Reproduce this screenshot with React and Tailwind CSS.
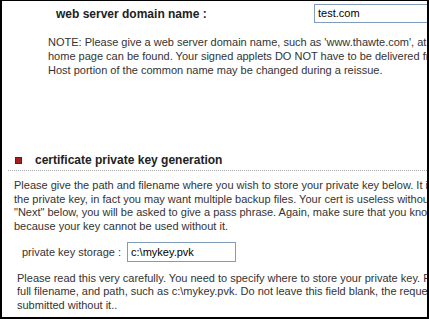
export default function App() {
  return (
    <div className="w-[429px] h-[319px] overflow-hidden bg-white border-t border-l-2 border-r-2 border-b-2 border-black font-['Liberation_Sans',Arial,sans-serif] text-[11px] text-[#333]">
      {/* domain name row */}
      <div className="flex items-start h-[27px] pt-[3px] whitespace-nowrap">
        <div className="w-[260px] shrink-0 pl-[54px] pt-[2px] text-[12px] font-bold text-[#222] leading-[16px]">
          web server domain name :
        </div>
        <div className="ml-[52px] w-[140px] h-[19px] border border-[#7f9db9] pl-[3px] text-[11px] text-black leading-[17px] shrink-0">
          test.com
        </div>
      </div>

      <p className="mt-[7px] pl-[46px] leading-[14px] whitespace-nowrap">
        NOTE: Please give a web server domain name, such as 'www.thawte.com', at which your
        <br />
        home page can be found. Your signed applets DO NOT have to be delivered from this server. The
        <br />
        Host portion of the common name may be changed during a reissue.
      </p>

      {/* section header */}
      <div className="mt-[75px] flex items-center h-[16px] whitespace-nowrap">
        <span className="ml-[13px] w-[7px] h-[7px] bg-[#a51d1d] border border-[#7a1010]" />
        <span className="ml-[13px] text-[12px] font-bold text-[#222] leading-[16px]">
          certificate private key generation
        </span>
      </div>
      <div className="mt-[2px] ml-[6px] border-b border-dotted border-[#aaa]" />

      <p className="mt-[8px] pl-[12px] leading-[13.7px] whitespace-nowrap">
        Please give the path and filename where you wish to store your private key below. It is important to back up
        <br />
        the private key, in fact you may want multiple backup files. Your cert is useless without it. When you press
        <br />
        "Next" below, you will be asked to give a pass phrase. Again, make sure that you know this pass phrase,
        <br />
        because your key cannot be used without it.
      </p>

      <div className="mt-[8px] flex items-center pl-[20px] whitespace-nowrap">
        <span className="leading-[14px]">private key storage :</span>
        <div className="ml-[6px] w-[109px] h-[20px] border border-[#7f9db9] pl-[3px] text-[11px] text-black leading-[18px]">
          c:\mykey.pvk
        </div>
      </div>

      <p className="mt-[10px] pl-[15px] leading-[13.5px] whitespace-nowrap">
        Please read this very carefully. You need to specify where to store your private key. Please give the
        <br />
        full filename, and path, such as c:\mykey.pvk. Do not leave this field blank, the request can not be
        <br />
        submitted without it..
      </p>
    </div>
  );
}
